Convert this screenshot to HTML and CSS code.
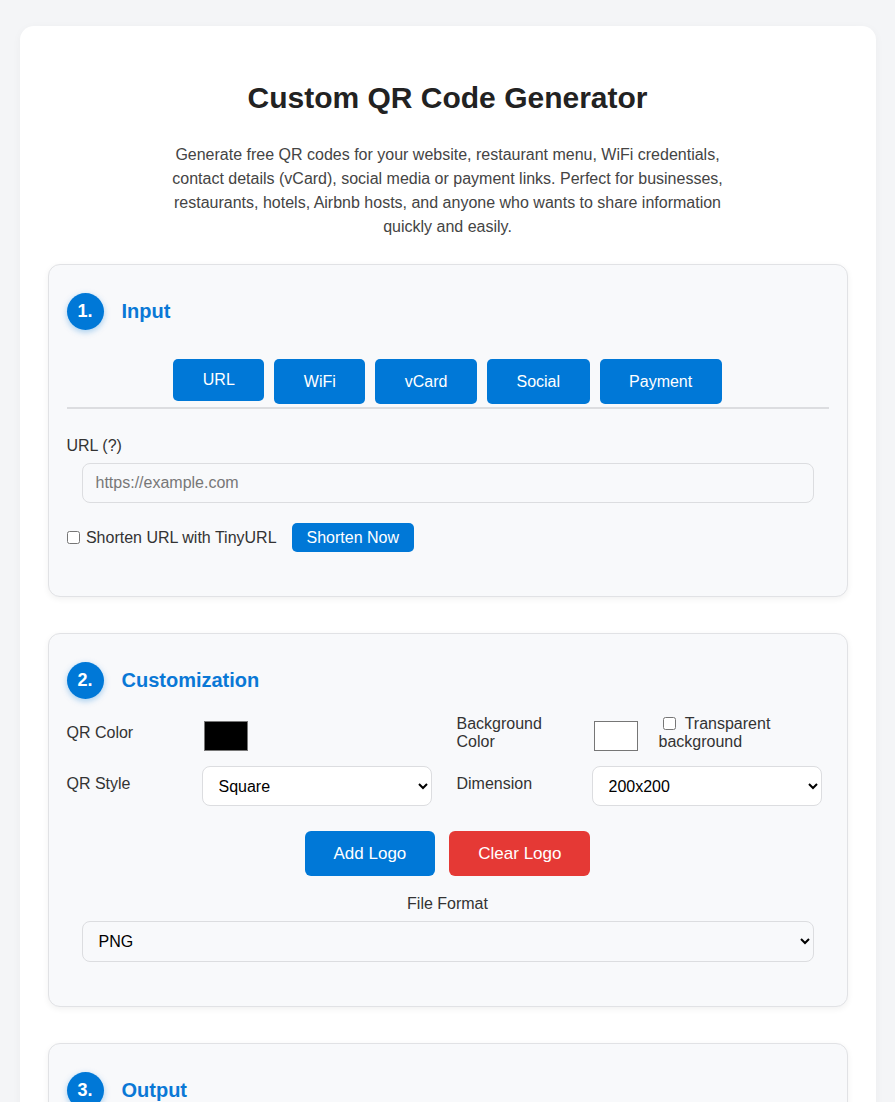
FILE: index.html
```html
<!DOCTYPE html>
<html lang="en">
<head>
    <meta charset="UTF-8">
    <title>Custom QR Code Generator</title>
    <link rel="stylesheet" href="styles.css">
</head>
<body>
    <div class="container">
        <h1>Custom QR Code Generator</h1>
        <p class="intro">Generate free QR codes for your website, restaurant menu, WiFi credentials, contact details (vCard), social media or payment links. Perfect for businesses, restaurants, hotels, Airbnb hosts, and anyone who wants to share information quickly and easily.</p>

        <!-- step 1 -->
        <div class="section">
            <div class="section-head">
                <span class="step">1.</span>
                <h2>Input</h2>
            </div>
            <div class="tabs">
                <button class="tab active">URL</button>
                <button class="tab">WiFi</button>
                <button class="tab">vCard</button>
                <button class="tab">Social</button>
                <button class="tab">Payment</button>
            </div>
            <label class="field-label" for="url">URL (?)</label>
            <input class="text-input" type="text" id="url" placeholder="https://example.com">
            <div class="shorten-row">
                <label class="check"><input type="checkbox"> Shorten URL with TinyURL</label>
                <button class="small-btn">Shorten Now</button>
            </div>
        </div>

        <!-- step 2 -->
        <div class="section">
            <div class="section-head">
                <span class="step">2.</span>
                <h2>Customization</h2>
            </div>
            <div class="options">
                <div class="option">
                    <label>QR Color</label>
                    <input type="color" class="swatch" value="#000000">
                </div>
                <div class="option">
                    <label>Background Color</label>
                    <input type="color" class="swatch" value="#ffffff">
                    <label class="check transparent"><input type="checkbox"> Transparent background</label>
                </div>
                <div class="option">
                    <label>QR Style</label>
                    <select class="select">
                        <option>Square</option>
                        <option>Dots</option>
                        <option>Rounded</option>
                    </select>
                </div>
                <div class="option">
                    <label>Dimension</label>
                    <select class="select">
                        <option>200x200</option>
                        <option>300x300</option>
                        <option>500x500</option>
                    </select>
                </div>
            </div>
            <div class="logo-btns">
                <button class="btn btn-blue">Add Logo</button>
                <button class="btn btn-red">Clear Logo</button>
            </div>
            <div class="format-label">File Format</div>
            <select class="select wide">
                <option>PNG</option>
                <option>JPG</option>
                <option>SVG</option>
            </select>
        </div>

        <!-- step 3 -->
        <div class="section">
            <div class="section-head">
                <span class="step">3.</span>
                <h2>Output</h2>
            </div>
            <div class="output-box"></div>
        </div>
    </div>
</body>
</html>
```

FILE: styles.css
```css
*{
    box-sizing: border-box;
}
body{
    margin: 0;
    padding: 26px 0 40px;
    background: #f4f5f7;
    font-family: "Liberation Sans", Arial, sans-serif;
    color: #333;
}
.container{
    max-width: 856px;
    margin: 0 auto;
    background: #fff;
    border-radius: 14px;
    padding: 30px 28px;
    box-shadow: 0 2px 10px rgba(0,0,0,0.04);
}
h1{
    margin: 25px 0 28px;
    font-size: 30px;
    text-align: center;
    color: #222;
}
.intro{
    max-width: 560px;
    margin: 0 auto 25px;
    text-align: center;
    font-size: 16px;
    line-height: 24px;
    color: #444;
}
.section{
    background: #f8f9fb;
    border: 1px solid #e1e2e5;
    border-radius: 12px;
    padding: 28px 18px 44px;
    margin-bottom: 36px;
    box-shadow: 0 2px 6px rgba(0,0,0,0.06);
}
.section-head{
    display: flex;
    align-items: center;
    gap: 18px;
    margin-bottom: 16px;
}
.step{
    width: 37px;
    height: 37px;
    border-radius: 50%;
    background: #0078d7;
    color: #fff;
    font-weight: bold;
    font-size: 18px;
    display: flex;
    align-items: center;
    justify-content: center;
    box-shadow: 0 2px 6px rgba(0,120,215,0.35);
}
h2{
    margin: 0;
    font-size: 20px;
    color: #0a78d6;
}
.tabs{
    display: flex;
    justify-content: center;
    align-items: flex-start;
    gap: 10px;
    padding: 13px 0 3px;
    border-bottom: 2px solid #dcdde0;
}
.tab{
    background: #0078d7;
    color: #fff;
    border: none;
    border-radius: 5px;
    font-family: inherit;
    font-size: 16px;
    padding: 13px 29.5px;
    height: 45px;
}
.tab.active{
    height: 42px;
    padding: 11px 29.5px;
}
.field-label{
    display: block;
    font-size: 16px;
    margin: 28px 0 8px;
}
.text-input{
    display: block;
    width: calc(100% - 30px);
    margin: 0 15px;
    height: 40px;
    padding: 10px 13px;
    border: 1px solid #dcdde0;
    border-radius: 8px;
    background: #f8f9fb;
    font-family: inherit;
    font-size: 16px;
}
.text-input::placeholder{
    color: #777;
}
.shorten-row{
    display: flex;
    align-items: center;
    margin-top: 20px;
}
.check{
    font-size: 16px;
    color: #333;
}
.check input{
    margin: 0 2px 0 0;
    width: 13px;
    height: 13px;
    vertical-align: -1px;
}
.small-btn{
    margin-left: 15px;
    background: #0078d7;
    color: #fff;
    border: none;
    border-radius: 5px;
    font-family: inherit;
    font-size: 16px;
    height: 29px;
    padding: 0 15px;
}
.options{
    display: grid;
    grid-template-columns: 365px 365px;
    column-gap: 25px;
    row-gap: 10px;
}
.option{
    display: flex;
    align-items: center;
}
.option > label:first-child{
    flex: 0 0 135px;
    padding-right: 30px;
    margin-bottom: 5px;
    font-size: 16px;
    line-height: 18px;
}
.swatch{
    -webkit-appearance: none;
    appearance: none;
    width: 44px;
    height: 30px;
    padding: 0;
    margin: 0 0 0 2px;
    border: none;
    background: none;
}
.swatch::-webkit-color-swatch-wrapper{
    padding: 0;
}
.swatch::-webkit-color-swatch{
    border: 1px solid #767676;
    border-radius: 0;
}
.transparent{
    margin-left: 21px;
    width: 150px;
    line-height: 18px;
    margin-bottom: 5px;
}
.transparent input{
    margin: 0 5px 0 4px;
}
.select{
    flex: 1;
    height: 40px;
    padding: 0 12px;
    border: 1px solid #dcdde0;
    border-radius: 8px;
    background: #fff;
    font-family: inherit;
    font-size: 16px;
    color: #000;
}
.select.wide{
    display: block;
    width: calc(100% - 30px);
    margin: 0 15px;
    height: 41px;
    background: #f8f9fb;
}
.logo-btns{
    display: flex;
    justify-content: center;
    gap: 14px;
    margin-top: 25px;
}
.btn{
    border: none;
    border-radius: 6px;
    color: #fff;
    font-family: inherit;
    font-size: 17px;
    height: 45px;
    padding: 0 29px;
}
.btn-blue{
    background: #0078d7;
}
.btn-red{
    background: #e53935;
}
.format-label{
    text-align: center;
    font-size: 16px;
    margin: 19px 0 8px;
}
.output-box{
    height: 200px;
}
```
